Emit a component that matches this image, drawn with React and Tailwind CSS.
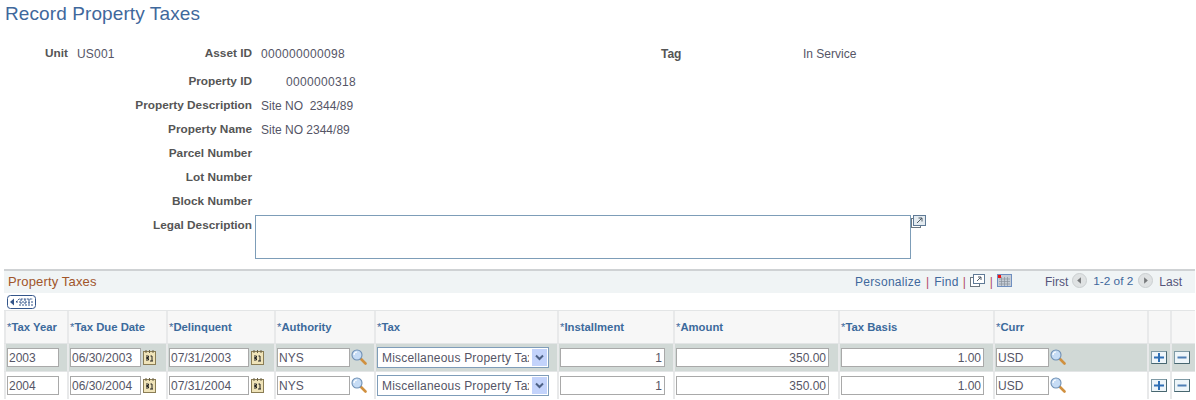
import React from "react";

const rows = [
  { year: "2003", due: "06/30/2003", delinquent: "07/31/2003", bg: "bg-[#d1d9d6]" },
  { year: "2004", due: "06/30/2004", delinquent: "07/31/2004", bg: "bg-white" },
];

const columns = ["Tax Year", "Tax Due Date", "Delinquent", "Authority", "Tax", "Installment", "Amount", "Tax Basis", "Curr", "", ""];

const gridCols = "grid grid-cols-[63px_99px_108px_100px_183px_116px_165px_155px_154px_23px_23px]";

function Lookup() {
  return (
    <svg width="16" height="16" viewBox="0 0 16 16" className="shrink-0 -mt-[1px]">
      <line x1="10" y1="10" x2="14.500" y2="14.500" stroke="#d0903f" strokeWidth="2.600" strokeLinecap="round" />
      <circle cx="6" cy="6" r="5" fill="#c6dcf5" stroke="#6f90b5" strokeWidth="1.100" />
      <path d="M3 6a3 3 0 0 1 3-3" fill="none" stroke="#ffffff" strokeWidth="1.200" />
    </svg>
  );
}

function CalendarIcon() {
  return (
    <svg width="13" height="15" viewBox="0 0 13 15" className="shrink-0 -mt-[1px]">
      <rect x="0.500" y="1.500" width="12" height="13" fill="#efe3b8" stroke="#8a7d55" />
      <path d="M3 0v3M6.500 0v3M10 0v3" stroke="#6b6247" />
      <path d="M3 6h2.500v1.500h-2v1h2v1.500h-2.500M7.500 6h1.500v5M7 11h3" fill="none" stroke="#222222" />
    </svg>
  );
}

function Input({ value, className, right }) {
  return (
    <div
      className={`${className} h-[19px] flex items-center bg-white border border-[#a9a9a9] text-[12px] text-[#555566] whitespace-nowrap ${
        right ? "justify-end pr-[2px]" : "pl-[1px]"
      }`}
    >
      {value}
    </div>
  );
}

function RoundButton({ dir }) {
  return (
    <svg width="15" height="15" viewBox="0 0 16 16">
      <circle cx="8" cy="8" r="7.500" fill="#dfe2e3" stroke="#c9cdcf" />
      <path d={dir === "left" ? "M9.500 4.500v7L5.500 8z" : "M6.500 4.500v7l4-3.500z"} fill="#77797b" />
    </svg>
  );
}

function RowButton({ minus }) {
  return (
    <svg width="16" height="13" viewBox="0 0 16 13" className="ml-[1px]">
      <rect x="0.500" y="0.500" width="15" height="12" fill="#eef5f9" stroke="#7f9aa5" />
      <path d="M15.500 0.500v12h-15" fill="none" stroke="#47666f" />
      {minus ? (
        <rect x="3.500" y="5.500" width="9" height="2" fill="#4f7fb5" />
      ) : (
        <path d="M3 6.500h10M8 2v9" stroke="#2f6fb5" strokeWidth="2" />
      )}
    </svg>
  );
}

function FormRow({ label, value, className = "h-6" }) {
  return (
    <div className={`flex items-center ${className}`}>
      <div className="w-[252px] text-right font-bold text-[11.8px] text-[#555555]">{label}</div>
      <div className="ml-[9px] text-[#555566]">{value}</div>
    </div>
  );
}

function Cell({ children }) {
  return <div className="flex items-center pl-[1px] border-l-2 border-[#e8e9ea]">{children}</div>;
}

export default function App() {
  return (
    <div className="w-[1196px] h-[400px] overflow-hidden bg-white font-['Liberation_Sans',sans-serif] text-[12px]">
      <h1 className="h-[27px] pl-[5px] text-[19px] tracking-[0.1px] leading-[27px] text-[#3f689c]">Record Property Taxes</h1>

      {/* Header fields */}
      <div className="mt-[18px] flex items-center h-[18px]">
        <div className="w-[68px] text-right font-bold text-[11.8px] text-[#555555]">Unit</div>
        <div className="ml-[9px] w-[80px] tracking-[0.2px] text-[#555566]">US001</div>
        <div className="w-[95px] text-right font-bold text-[11.8px] text-[#555555]">Asset ID</div>
        <div className="ml-[9px] w-[400px] tracking-[0.33px] text-[#555566]">000000000098</div>
        <div className="w-[142px] font-bold text-[#555555]">Tag</div>
        <div className="text-[#555566]">In Service</div>
      </div>

      <div className="mt-[7px]">
        <FormRow label="Property ID" value={<span className="ml-[25px] tracking-[0.33px]">0000000318</span>} />
        <FormRow label="Property Description" value="Site NO&nbsp; 2344/89" />
        <FormRow label="Property Name" value="Site NO 2344/89" />
        <FormRow label="Parcel Number" value="" />
        <FormRow label="Lot Number" value="" />
        <FormRow label="Block Number" value="" />
      </div>

      <div className="flex items-start mt-[1px]">
        <div className="w-[252px] text-right font-bold text-[11.8px] text-[#555555] leading-[20px]">Legal Description</div>
        <div className="ml-[3px] w-[656px] h-[44px] border border-[#7d9db8] bg-white" />
        <svg width="15" height="15" viewBox="0 0 15 15">
          <rect x="0.500" y="3.500" width="9" height="9" fill="#ffffff" stroke="#6c7780" />
          <rect x="2.500" y="0.500" width="12" height="10" fill="#e4ebf0" stroke="#5f7a96" />
          <path d="M6 8l5-5M7.500 3H11v3.500" fill="none" stroke="#4f5b66" />
        </svg>
      </div>

      {/* Property Taxes grid */}
      <div className="mt-[10px] ml-[4px] w-[1191px] border-t-2 border-[#cfd2d4]">
        <div className="h-[22px] bg-[#f0f4f5] flex items-center pl-[4px] pr-[13px]">
          <span className="text-[13px] tracking-[0.15px] text-[#a0552a]">Property Taxes</span>
          <div className="ml-auto flex items-center text-[#3f689c]">
            <span className="tracking-[0.3px]">Personalize</span>
            <span className="mx-[5px] text-[#b0476a]">|</span>
            <span className="tracking-[0.3px]">Find</span>
            <span className="mx-[4px] text-[#b0476a]">|</span>
            <svg width="15" height="13" viewBox="0 0 15 13" className="-mt-[3px]">
              <rect x="0.500" y="3.500" width="9" height="9" fill="#ffffff" stroke="#6c7780" />
              <rect x="3.500" y="0.500" width="11" height="9" fill="#ffffff" stroke="#5f7a96" />
              <path d="M7 7l4-4M8 3h3v3" fill="none" stroke="#4f5b66" />
            </svg>
            <span className="ml-[5px] mr-[4px] text-[#b0476a]">|</span>
            <svg width="15" height="13" viewBox="0 0 15 13" className="-mt-[3px]">
              <rect x="0.500" y="0.500" width="14" height="12" fill="#c6cdd6" stroke="#6f8fc0" />
              <path d="M2 5h11M2 7.500h11M2 10h11M4.500 3v9M7.500 3v9M10.500 3v9" stroke="#8a929c" strokeWidth="0.700" />
              <rect x="1" y="1" width="3" height="3" fill="#ee1111" />
            </svg>
            <span className="ml-[33px] text-[#55557a]">First</span>
            <span className="ml-[4px] mr-[6px] -mt-[3px] flex"><RoundButton dir="left" /></span>
            <span className="text-[11.8px]">1-2 of 2</span>
            <span className="ml-[5px] mr-[6px] -mt-[3px] flex"><RoundButton dir="right" /></span>
            <span className="text-[#55557a]">Last</span>
          </div>
        </div>

        <div className="h-[17px] flex items-center pl-[3px]">
          <svg width="29" height="14" viewBox="0 0 29 14">
            <rect x="0.500" y="0.500" width="28" height="13" rx="3" fill="#ffffff" stroke="#33558a" />
            <path d="M7 3.500v7L3 7z" fill="#33558a" />
            <path d="M9 7l3-3h14M9 7h17M12 10h14M14 4v6M18 4v6M22 4v6" fill="none" stroke="#33558a" strokeDasharray="2 1" />
          </svg>
        </div>

        <div className={`${gridCols} h-[33px] border-t border-[#e3e5e6] bg-[#f7f7f7]`}>
          {columns.map((c, i) => (
            <div key={i} className="flex items-center pl-[1px] border-l-2 border-[#e8e9ea] font-bold text-[11.3px] text-[#3c6a9c] whitespace-nowrap">
              {c && <span className="font-normal">*</span>}
              {c}
            </div>
          ))}
        </div>

        {rows.map((r) => (
          <div key={r.year} className={`${gridCols} h-[28px] border-t border-[#e3e5e6] items-stretch ${r.bg}`}>
            <Cell><Input value={r.year} className="w-[52px]" /></Cell>
            <Cell>
              <div className="flex items-center gap-[2px]">
                <Input value={r.due} className="w-[71px]" />
                <CalendarIcon />
              </div>
            </Cell>
            <Cell>
              <div className="flex items-center gap-[2px]">
                <Input value={r.delinquent} className="w-[80px]" />
                <CalendarIcon />
              </div>
            </Cell>
            <Cell>
              <div className="flex items-center gap-[1px]">
                <Input value="NYS" className="w-[73px]" />
                <Lookup />
              </div>
            </Cell>
            <Cell>
              <div className="w-[172px] h-[21px] flex items-center bg-white border border-[#7f9db9] pl-[4px] pr-[1px] text-[#555566] overflow-hidden">
                <span className="w-[147px] overflow-hidden whitespace-nowrap tracking-[0.2px]">Miscellaneous Property Tax</span>
                <span className="ml-auto w-[15px] h-[17px] flex items-center justify-center bg-[#c3d3fb]">
                  <svg width="9" height="7" viewBox="0 0 9 7">
                    <path d="M1 1.500l3.500 3.500L8 1.500" fill="none" stroke="#4d6185" strokeWidth="2" />
                  </svg>
                </span>
              </div>
            </Cell>
            <Cell><Input value="1" right className="w-[105px]" /></Cell>
            <Cell><Input value="350.00" right className="w-[153px]" /></Cell>
            <Cell><Input value="1.00" right className="w-[143px]" /></Cell>
            <Cell>
              <div className="flex items-center gap-[1px]">
                <Input value="USD" className="w-[53px]" />
                <Lookup />
              </div>
            </Cell>
            <Cell><RowButton /></Cell>
            <Cell><RowButton minus /></Cell>
          </div>
        ))}
      </div>
    </div>
  );
}
